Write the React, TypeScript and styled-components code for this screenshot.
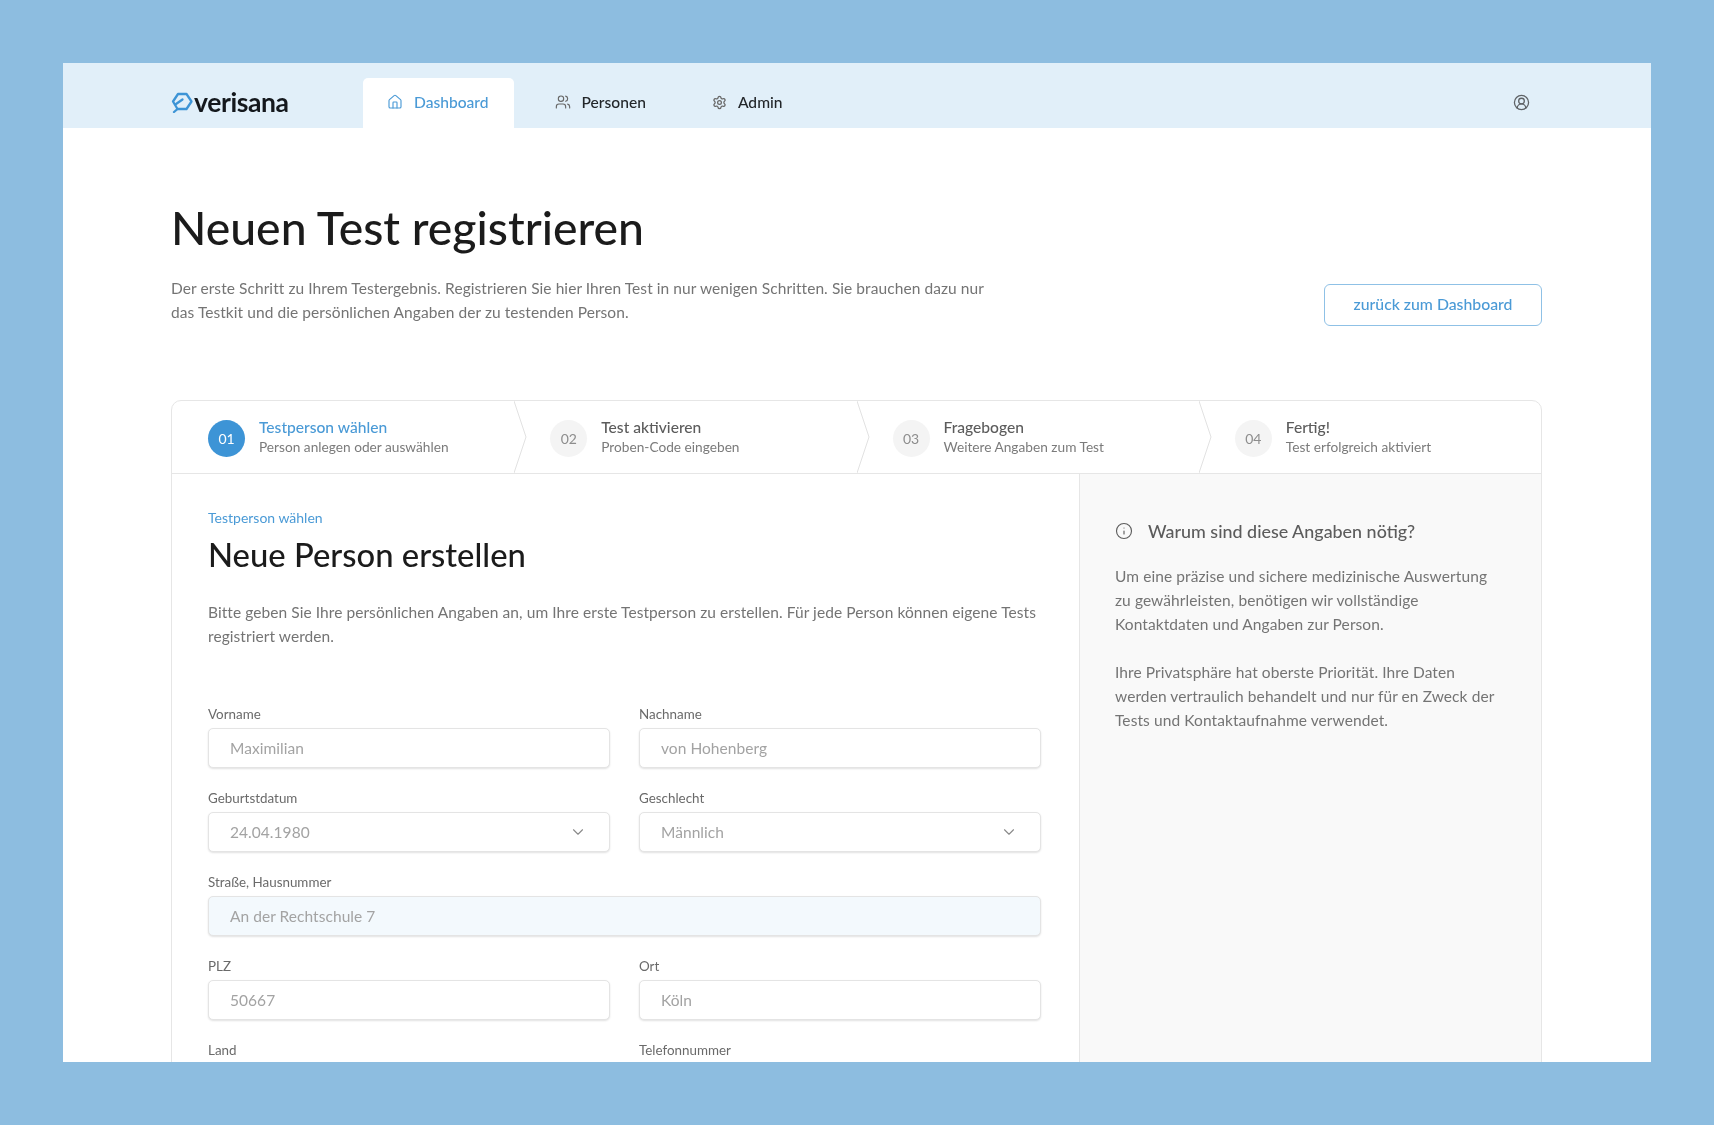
import React from "react";
import styled, { createGlobalStyle } from "styled-components";
import { ChevronDown, CircleUserRound, House, Info, Settings, Users } from "lucide-react";

const GlobalStyle = createGlobalStyle`
  html, body {
    margin: 0;
    padding: 0;
    background: #8dbde0;
  }
  * {
    box-sizing: border-box;
  }
`;

const Page = styled.div`
  width: 1714px;
  height: 1125px;
  padding: 63px;
  overflow: hidden;
  font-family: Lato, "Open Sans", sans-serif;
  color: #747474;
`;

const Panel = styled.div`
  width: 1588px;
  height: 999px;
  background: #fff;
  overflow: hidden;
  filter: blur(0.35px);
`;

const Header = styled.header`
  height: 65px;
  background: #e1eff9;
  display: flex;
  align-items: flex-end;
  padding: 0 109px 0 108px;
`;

const Logo = styled.div`
  width: 192px;
  height: 50px;
  padding-bottom: 2px;
  display: flex;
  align-items: center;
  gap: 1px;
  font-size: 26.5px;
  font-weight: 700;
  letter-spacing: -0.4px;
  color: #14181d;
`;

const Nav = styled.nav`
  display: flex;
  gap: 17px;
  flex: 1;
`;

const Tab = styled.div<{ $active?: boolean }>`
  height: 50px;
  padding: 0 25px 2px 24px;
  display: flex;
  align-items: center;
  gap: 11px;
  font-size: 15.6px;
  font-weight: 500;
  border-radius: 5px 5px 0 0;
  background: ${(p) => (p.$active ? "#fff" : "transparent")};
  color: ${(p) => (p.$active ? "#4a9ad6" : "#22262a")};
  svg {
    color: ${(p) => (p.$active ? "#4a9ad6" : "#666")};
  }
`;

const UserSlot = styled.div`
  height: 50px;
  margin-right: 12px;
  padding-bottom: 2px;
  display: flex;
  align-items: center;
  color: #5e6266;
`;

const Content = styled.main`
  padding: 0 109px 0 108px;
`;

const Title = styled.h1`
  margin: 0;
  padding-top: 71px;
  font-size: 46.3px;
  line-height: 56px;
  font-weight: 500;
  color: #1b1b1b;
`;

const Intro = styled.div`
  margin-top: 21px;
  display: flex;
  justify-content: space-between;
  align-items: flex-start;
`;

const IntroText = styled.p`
  margin: 0;
  width: 830px;
  font-size: 15.5px;
  line-height: 24px;
  letter-spacing: 0.07px;
`;

const BackButton = styled.button`
  width: 218px;
  height: 42px;
  margin-top: 8px;
  padding: 0 0 3px;
  background: #fff;
  border: 1.5px solid #8fc1e6;
  border-radius: 6px;
  color: #4a9ad6;
  font: 500 15.8px Lato, sans-serif;
`;

const Card = styled.section`
  margin-top: 74px;
  border: 1px solid #e6e6e6;
  border-radius: 10px 10px 0 0;
`;

const Stepper = styled.div`
  height: 73px;
  display: grid;
  grid-template-columns: repeat(4, 1fr);
  border-bottom: 1px solid #e6e6e6;
`;

const Step = styled.div`
  position: relative;
  display: flex;
  align-items: center;
  gap: 14px;
  padding: 2px 0 0 36px;
`;

const StepArrow = styled.svg`
  position: absolute;
  top: 0;
  right: -13px;
  width: 13px;
  height: 72px;
`;

const StepNumber = styled.div<{ $active?: boolean }>`
  width: 37px;
  height: 37px;
  border-radius: 50%;
  flex: none;
  display: flex;
  align-items: center;
  justify-content: center;
  font-size: 14px;
  background: ${(p) => (p.$active ? "#3d94d6" : "#f4f4f4")};
  color: ${(p) => (p.$active ? "#fff" : "#8d8d8d")};
`;

const StepText = styled.div`
  margin-top: -4px;
  display: flex;
  flex-direction: column;
  gap: 1px;
`;

const StepTitle = styled.div<{ $active?: boolean }>`
  font-size: 15.6px;
  line-height: 20px;
  font-weight: 500;
  color: ${(p) => (p.$active ? "#4a9ad6" : "#5c5c5c")};
`;

const StepHint = styled.div`
  font-size: 13.7px;
  line-height: 18px;
  color: #7b7b7b;
`;

const Body = styled.div`
  display: grid;
  grid-template-columns: 907px 1fr;
`;

const FormColumn = styled.div`
  padding: 35px 38px 0 36px;
`;

const Eyebrow = styled.div`
  font-size: 14px;
  line-height: 18px;
  color: #4a9ad6;
`;

const FormTitle = styled.h2`
  margin: 8px 0 0;
  font-size: 32.8px;
  line-height: 40px;
  font-weight: 500;
  color: #1b1b1b;
`;

const Lead = styled.p`
  margin: 25px 0 0;
  font-size: 15.5px;
  line-height: 24px;
  letter-spacing: 0.07px;
`;

const Fields = styled.div`
  margin-top: 57px;
  display: grid;
  grid-template-columns: 1fr 1fr;
  column-gap: 29px;
  row-gap: 21px;
`;

const Field = styled.label<{ $wide?: boolean }>`
  display: block;
  grid-column: ${(p) => (p.$wide ? "1 / -1" : "auto")};
`;

const FieldLabel = styled.div`
  font-size: 13.4px;
  line-height: 18px;
  margin-bottom: 5px;
  color: #6a6a6a;
`;

const FieldBox = styled.div<{ $filled?: boolean }>`
  height: 40px;
  padding: 0 22px 0 21px;
  display: flex;
  align-items: center;
  justify-content: space-between;
  border: 1px solid #e4e4e4;
  border-radius: 5px;
  box-shadow: 0 1px 2px rgba(0, 0, 0, 0.12);
  background: ${(p) => (p.$filled ? "#f3f9fd" : "#fff")};
  font-size: 15.5px;
  letter-spacing: 0.05px;
  color: #a3a3a3;
  svg {
    color: #8a8a8a;
  }
`;

const Aside = styled.aside`
  background: #f9f9f9;
  border-left: 1px solid #e6e6e6;
  padding: 45px 36px 0 35px;
`;

const AsideHead = styled.div`
  display: flex;
  align-items: center;
  gap: 15px;
  font-size: 17.9px;
  line-height: 24px;
  font-weight: 500;
  color: #5c5c5c;
`;

const AsideText = styled.p`
  margin: 21px 0 24px;
  font-size: 15.5px;
  line-height: 24px;
  letter-spacing: 0.09px;
  & + & {
    margin-top: 0;
  }
`;

const steps = [
  { no: "01", title: "Testperson wählen", hint: "Person anlegen oder auswählen", active: true },
  { no: "02", title: "Test aktivieren", hint: "Proben-Code eingeben" },
  { no: "03", title: "Fragebogen", hint: "Weitere Angaben zum Test" },
  { no: "04", title: "Fertig!", hint: "Test erfolgreich aktiviert" },
];

const fields = [
  { label: "Vorname", value: "Maximilian" },
  { label: "Nachname", value: "von Hohenberg" },
  { label: "Geburtstdatum", value: "24.04.1980", select: true },
  { label: "Geschlecht", value: "Männlich", select: true },
  { label: "Straße, Hausnummer", value: "An der Rechtschule 7", wide: true, filled: true },
  { label: "PLZ", value: "50667" },
  { label: "Ort", value: "Köln" },
  { label: "Land", value: "" },
  { label: "Telefonnummer", value: "" },
];

function LogoMark() {
  return (
    <svg width="22" height="21" viewBox="0 0 22 21" fill="none" stroke="#3d94d6" strokeWidth="2.3" strokeLinejoin="round" strokeLinecap="round">
      <path d="M7 2h8.5L20.5 9.5 15.5 17H6.5L2 9.5z" />
      <path d="M6.5 17 3 20" />
      <path d="M5 12 11.5 7.5" />
    </svg>
  );
}

export default function App() {
  return (
    <>
      <GlobalStyle />
      <Page>
        <Panel>
          <Header>
            <Logo>
              <LogoMark />
              verisana
            </Logo>
            <Nav>
              <Tab $active>
                <House size={16} strokeWidth={1.7} />
                Dashboard
              </Tab>
              <Tab>
                <Users size={16} strokeWidth={1.7} />
                Personen
              </Tab>
              <Tab>
                <Settings size={15} strokeWidth={2} />
                Admin
              </Tab>
            </Nav>
            <UserSlot>
              <CircleUserRound size={17} strokeWidth={1.8} />
            </UserSlot>
          </Header>
          <Content>
            <Title>Neuen Test registrieren</Title>
            <Intro>
              <IntroText>
                Der erste Schritt zu Ihrem Testergebnis. Registrieren Sie hier Ihren Test in nur wenigen Schritten. Sie brauchen dazu nur das Testkit und die persönlichen Angaben der zu testenden Person.
              </IntroText>
              <BackButton>zurück zum Dashboard</BackButton>
            </Intro>
            <Card>
              <Stepper>
                {steps.map((s, i) => (
                  <Step key={s.no}>
                    <StepNumber $active={s.active}>{s.no}</StepNumber>
                    <StepText>
                      <StepTitle $active={s.active}>{s.title}</StepTitle>
                      <StepHint>{s.hint}</StepHint>
                    </StepText>
                    {i < 3 && (
                      <StepArrow viewBox="0 0 13 72" fill="none" stroke="#e2e2e2">
                        <path d="M0 0 12 36 0 72" />
                      </StepArrow>
                    )}
                  </Step>
                ))}
              </Stepper>
              <Body>
                <FormColumn>
                  <Eyebrow>Testperson wählen</Eyebrow>
                  <FormTitle>Neue Person erstellen</FormTitle>
                  <Lead>
                    Bitte geben Sie Ihre persönlichen Angaben an, um Ihre erste Testperson zu erstellen. Für jede Person können eigene Tests registriert werden.
                  </Lead>
                  <Fields>
                    {fields.map((f) => (
                      <Field key={f.label} $wide={f.wide}>
                        <FieldLabel>{f.label}</FieldLabel>
                        <FieldBox $filled={f.filled}>
                          {f.value}
                          {f.select && <ChevronDown size={18} strokeWidth={1.5} />}
                        </FieldBox>
                      </Field>
                    ))}
                  </Fields>
                </FormColumn>
                <Aside>
                  <AsideHead>
                    <Info size={18} strokeWidth={1.5} />
                    Warum sind diese Angaben nötig?
                  </AsideHead>
                  <AsideText>
                    Um eine präzise und sichere medizinische Auswertung zu gewährleisten, benötigen wir vollständige Kontaktdaten und Angaben zur Person.
                  </AsideText>
                  <AsideText>
                    Ihre Privatsphäre hat oberste Priorität. Ihre Daten werden vertraulich behandelt und nur für en Zweck der Tests und Kontaktaufnahme verwendet.
                  </AsideText>
                </Aside>
              </Body>
            </Card>
          </Content>
        </Panel>
      </Page>
    </>
  );
}
